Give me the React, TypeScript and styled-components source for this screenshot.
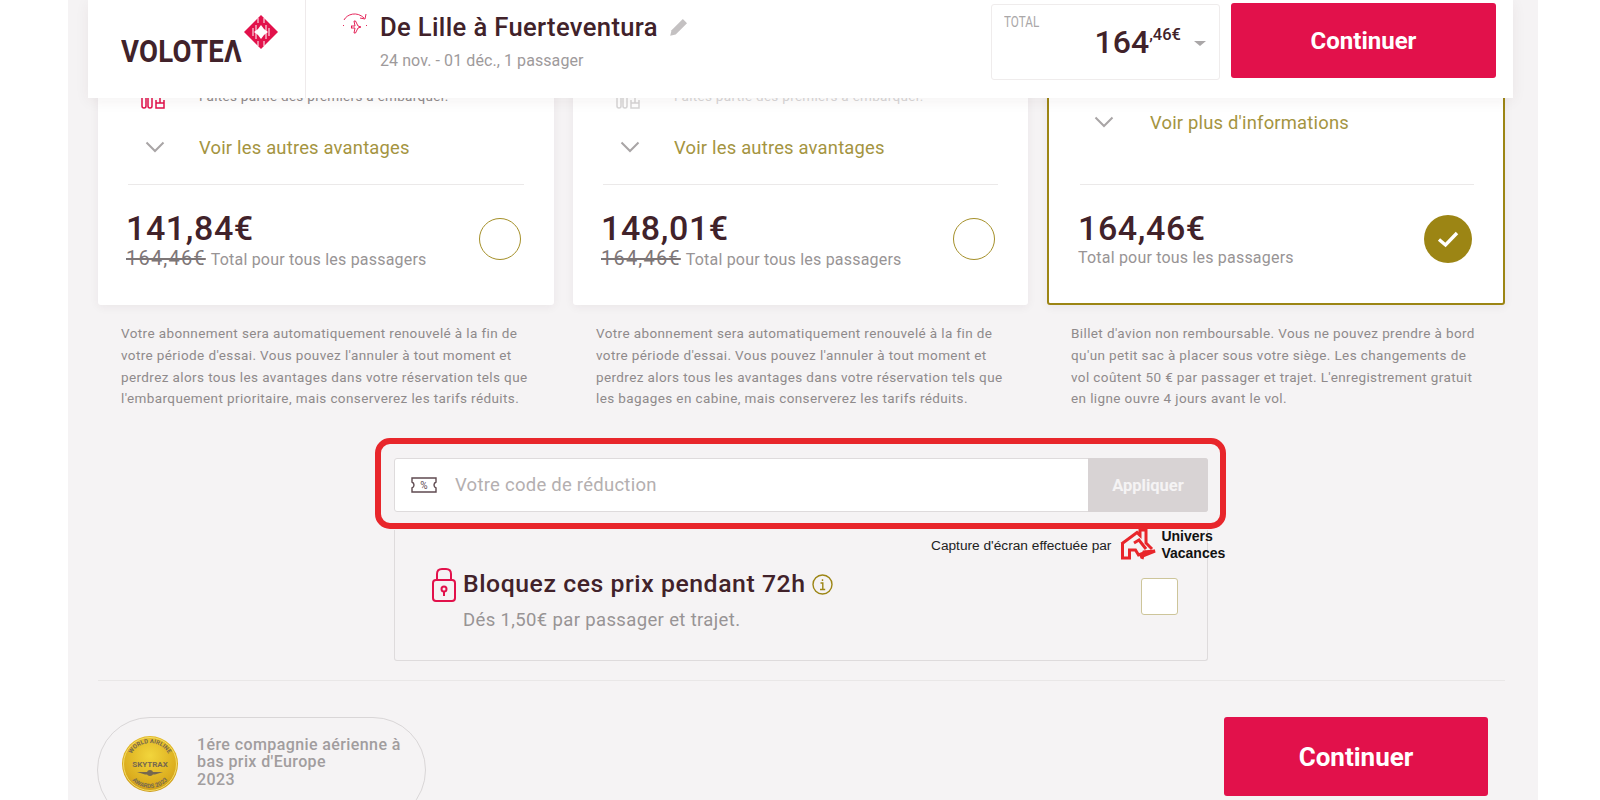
import React from "react";
import styled, { createGlobalStyle } from "styled-components";

const Global = createGlobalStyle`
  html, body { margin: 0; padding: 0; background: #fff; overflow: hidden; }
  * { box-sizing: border-box; }
  body { font-family: "Roboto", "Liberation Sans", sans-serif; color: #41222a; }
`;

const Page = styled.div`
  position: relative;
  width: 1600px;
  height: 800px;
  overflow: hidden;
`;

const Main = styled.main`
  margin-left: 68px;
  width: 1470px;
  height: 800px;
  background: #f5f3f4;
  padding: 0 33px 0 30px;
  display: flex;
  flex-direction: column;
`;

const Header = styled.header`
  position: absolute;
  left: 88px;
  top: 0;
  width: 1425px;
  height: 98px;
  background: #fff;
  display: flex;
  box-shadow: 0 3px 14px rgba(60, 30, 40, 0.06);
  z-index: 3;
`;

const LogoCell = styled.div`
  width: 218px;
  flex: none;
  border-right: 1px solid #eeeaeb;
  display: flex;
  align-items: flex-start;
  padding: 15px 0 0 33px;
  position: relative;
`;

const LogoText = styled.span`
  font-family: "Roboto", "Liberation Sans", sans-serif;
  font-weight: 700;
  font-size: 32px;
  line-height: 32px;
  letter-spacing: 0.3px;
  color: #41222a;
  margin-top: 20px;
  transform: scaleX(0.86);
  transform-origin: left center;
`;

const LogoMark = styled.svg`
  position: absolute;
  left: 156px;
  top: 15px;
`;

const Trip = styled.div`
  flex: 1;
  display: flex;
  padding: 12px 0 0 35px;
`;

const TripIcon = styled.svg`
  flex: none;
  margin-right: 11px;
`;

const TripInfo = styled.div`
  display: flex;
  flex-direction: column;
`;

const TripTitle = styled.div`
  display: flex;
  align-items: center;
  gap: 10px;
  font-size: 25.6px;
  line-height: 30px;
  font-weight: 500;
  letter-spacing: 0.35px;
  color: #41222a;
`;

const TripDates = styled.div`
  font-size: 16px;
  line-height: 20px;
  margin-top: 9px;
  color: #9e9a9b;
  letter-spacing: 0.08px;
`;

const HeaderRight = styled.div`
  display: flex;
  gap: 11px;
  padding: 3px 17px 0 0;
  align-items: flex-start;
`;

const TotalBox = styled.div`
  position: relative;
  width: 229px;
  height: 76px;
  margin-top: 1px;
  border: 1px solid #efecec;
  border-radius: 3px;
  background: #fff;
  padding: 9px 12px 0;
`;

const TotalLabel = styled.div`
  font-size: 15px;
  line-height: 16px;
  color: #aaa7a8;
  transform: scaleX(0.78);
  transform-origin: left center;
`;

const TotalValue = styled.div`
  display: flex;
  justify-content: flex-end;
  align-items: flex-start;
  padding-right: 1px;
  margin-top: -7px;
`;

const TotalInt = styled.span`
  font-size: 32px;
  line-height: 38px;
  font-weight: 500;
  color: #41222a;
`;

const TotalDec = styled.span`
  font-size: 16.5px;
  line-height: 22px;
  font-weight: 500;
  color: #41222a;
  margin-right: 13px;
  margin-top: 1px;
`;

const Caret = styled.span`
  width: 0;
  height: 0;
  margin-top: 18px;
  border-left: 6px solid transparent;
  border-right: 6px solid transparent;
  border-top: 5px solid #aaa7a8;
`;

const Cta = styled.button<{ $w: number; $h: number; $size: number }>`
  width: ${(p) => p.$w}px;
  height: ${(p) => p.$h}px;
  flex: none;
  border: 0;
  border-radius: 3px;
  background: #e2114b;
  color: #fff;
  font-family: "Roboto", sans-serif;
  font-size: ${(p) => p.$size}px;
  font-weight: 700;
`;

const Cards = styled.div`
  display: grid;
  grid-template-columns: 456px 455px 458px;
  column-gap: 19px;
`;

const Column = styled.section`
  display: flex;
  flex-direction: column;
`;

const Card = styled.div<{ $selected?: boolean }>`
  height: 305px;
  background: #fff;
  border: ${(p) => (p.$selected ? "2px solid #9c8514" : "0")};
  border-radius: 3px;
  box-shadow: 0 2px 10px rgba(70, 40, 50, 0.06);
  display: flex;
  flex-direction: column;
  justify-content: flex-end;
  padding: ${(p) => (p.$selected ? "0 29px 0 31px" : "0 30px")};
`;

const Perk = styled.div<{ $faded?: boolean }>`
  display: flex;
  align-items: center;
  gap: 34px;
  margin-left: 13px;
  height: 26px;
  margin-bottom: 26px;
  font-size: 13.5px;
  color: #8f8a8b;
  opacity: ${(p) => (p.$faded ? 0.35 : 1)};
  letter-spacing: 0.3px;
`;

const More = styled.div<{ $after: number; $indent: number; $space: number }>`
  display: flex;
  align-items: center;
  gap: ${(p) => p.$space}px;
  height: 24px;
  margin-left: ${(p) => p.$indent}px;
  margin-bottom: ${(p) => p.$after}px;
  font-size: 18.4px;
  letter-spacing: 0.2px;
  color: #a4943f;
`;

const Rule = styled.hr`
  width: 100%;
  margin: 0;
  border: 0;
  border-top: 1px solid #ebe9e9;
`;

const PriceRow = styled.div<{ $inset?: boolean }>`
  height: ${(p) => (p.$inset ? 118 : 120)}px;
  display: flex;
  justify-content: space-between;
  align-items: flex-start;
  padding-top: 25px;
`;

const PriceText = styled.div`
  display: flex;
  flex-direction: column;
  margin-left: -2px;
`;

const Price = styled.div`
  font-size: 34px;
  line-height: 36px;
  font-weight: 500;
  letter-spacing: 0.6px;
  color: #41222a;
`;

const PriceNote = styled.div`
  font-size: 16px;
  line-height: 22px;
  margin-top: 1px;
  color: #989495;
  letter-spacing: 0.2px;
`;

const OldPrice = styled.s`
  font-size: 20px;
  letter-spacing: 1.2px;
  color: #7d7677;
  margin-right: 5px;
`;

const Radio = styled.span`
  width: 42px;
  height: 42px;
  margin: 8px 3px 0 0;
  border: 1.5px solid #a5902a;
  border-radius: 50%;
  background: #fff;
`;

const Selected = styled.span`
  width: 48px;
  height: 48px;
  margin: 5px 2px 0 0;
  border-radius: 50%;
  background: #9c8514;
  display: flex;
  align-items: center;
  justify-content: center;
`;

const Terms = styled.p<{ $indent: number }>`
  margin: 0;
  padding: 18px 10px 0 ${(p) => p.$indent}px;
  font-size: 13.5px;
  line-height: 21.8px;
  letter-spacing: 0.39px;
  color: #8f8a8b;
  white-space: pre-line;
`;

const Promo = styled.div`
  align-self: center;
  width: 814px;
  height: 54px;
  margin: 48px 0 0 -1px;
  background: #fff;
  border: 1px solid #dedbdc;
  border-radius: 3px;
  display: flex;
  align-items: center;
  flex: none;
`;

const PromoIcon = styled.svg`
  margin-left: 15px;
  flex: none;
`;

const PromoText = styled.span`
  flex: 1;
  margin-left: 17px;
  font-size: 18.5px;
  letter-spacing: 0.25px;
  color: #b4afb0;
`;

const PromoButton = styled.span`
  width: 120px;
  height: 54px;
  margin: -1px -1px -1px 0;
  background: #d8d3d4;
  border-radius: 0 3px 3px 0;
  color: #f5f3f4;
  font-weight: 700;
  font-size: 16.5px;
  display: flex;
  align-items: center;
  justify-content: center;
`;

const Highlight = styled.div`
  position: absolute;
  left: 375px;
  top: 438px;
  width: 851px;
  height: 91px;
  border: 6px solid #e8262b;
  border-radius: 15px;
  z-index: 2;
`;

const Credit = styled.div`
  position: absolute;
  left: 931px;
  top: 528px;
  display: flex;
  align-items: center;
  font-family: "Liberation Sans", sans-serif;
  color: #222;
  z-index: 1;
`;

const CreditText = styled.span`
  font-size: 13.7px;
  margin-right: 9px;
`;

const CreditBrand = styled.span`
  font-size: 14px;
  line-height: 17px;
  font-weight: 700;
  color: #111;
  margin-left: 5px;
  white-space: pre-line;
`;

const Lock = styled.div`
  align-self: center;
  width: 814px;
  height: 131px;
  margin: 18px 0 0 -1px;
  border: 1px solid #dedbdc;
  border-top: 0;
  border-radius: 0 0 3px 3px;
  display: flex;
  flex: none;
  padding: 38px 29px 0 37px;
`;

const LockBody = styled.div`
  flex: 1;
  margin-left: 7px;
`;

const LockTitle = styled.div`
  display: flex;
  align-items: center;
  gap: 6px;
  font-size: 24.8px;
  line-height: 32px;
  font-weight: 500;
  letter-spacing: 0.55px;
  color: #41222a;
`;

const LockNote = styled.div`
  font-size: 18.5px;
  line-height: 22px;
  margin-top: 9px;
  color: #989495;
  letter-spacing: 0.36px;
`;

const Check = styled.span`
  width: 37px;
  height: 37px;
  margin-top: 10px;
  background: #fff;
  border: 1px solid #cdc59a;
  border-radius: 3px;
`;

const Divider = styled.hr`
  width: 100%;
  flex: none;
  margin: 19px 0 0;
  border: 0;
  border-top: 1px solid #e9e7e7;
`;

const Footer = styled.footer`
  display: flex;
  justify-content: space-between;
  padding: 36px 17px 0 0;
  flex: none;
`;

const Award = styled.div`
  width: 329px;
  height: 106px;
  margin-left: -1px;
  border: 1px solid #d9d6d7;
  border-radius: 54px;
  display: flex;
  align-items: flex-start;
  padding: 18px 0 0 24px;
`;

const AwardText = styled.div`
  margin-left: 19px;
  font-size: 16px;
  line-height: 17.3px;
  font-weight: 500;
  letter-spacing: 0.4px;
  color: #a19d9e;
  white-space: pre-line;
`;

const Chevron = () => (
  <svg width="20" height="12" viewBox="0 0 20 12" fill="none">
    <path d="M1.5 1.5 10 10l8.5-8.5" stroke="#a9a5a6" strokeWidth="2" />
  </svg>
);

const Seat = ({ color }: { color: string }) => (
  <svg width="24" height="26" viewBox="0 0 24 26" fill="none" stroke={color} strokeWidth="1.5">
    <path d="M1 12v11q0 2 2 2t2-2V12M7 12v11q0 2 2 2t2-2V12" />
    <path d="M15 17v8h8v-8M15 20h8M19 14v6" />
  </svg>
);

const cardData = [
  {
    price: "141,84€",
    faded: false,
    terms:
      "Votre abonnement sera automatiquement renouvelé à la fin de\nvotre période d'essai. Vous pouvez l'annuler à tout moment et\nperdrez alors tous les avantages dans votre réservation tels que\nl'embarquement prioritaire, mais conserverez les tarifs réduits.",
  },
  {
    price: "148,01€",
    faded: true,
    terms:
      "Votre abonnement sera automatiquement renouvelé à la fin de\nvotre période d'essai. Vous pouvez l'annuler à tout moment et\nperdrez alors tous les avantages dans votre réservation tels que\nles bagages en cabine, mais conserverez les tarifs réduits.",
  },
];

export default function App() {
  return (
    <Page>
      <Global />
      <Header>
        <LogoCell>
          <LogoText>VOLOTEΛ</LogoText>
          <LogoMark width="34" height="34" viewBox="0 0 34 34">
            <path d="M17 0 34 17 17 34 0 17Z" fill="#e2114b" />
            <path d="M17 10l3 4 4 3-4 3-3 4-3-4-4-3 4-3Z" fill="#fff" />
            <path d="M9 13v8M12 10v14M22 10v14M25 13v8M14 3v5M20 3v5M14 26v5M20 26v5" stroke="#fff" strokeWidth="1" />
          </LogoMark>
        </LogoCell>
        <Trip>
          <TripIcon width="28" height="26" viewBox="0 0 28 26" fill="none" stroke="#e2114b" strokeWidth="0.9">
            <path d="M3 8C6 2 16-1 23 6" />
            <path d="M25 2l-1 5-5-1" />
            <path d="M2 13l1 1M25 13l1 1" />
            <path d="M10 14h4l-1-5h1.500l2.500 5 3 1-3 1-2.500 5H13l1-5h-4l1-1Z" />
          </TripIcon>
          <TripInfo>
            <TripTitle>
              De Lille à Fuerteventura
              <svg width="22" height="22" viewBox="0 0 20 20">
                <path d="M2 18l1.200-5L13.500 2.700l3.800 3.800L7 16.800Z" fill="#c4c1c2" />
              </svg>
            </TripTitle>
            <TripDates>24 nov. - 01 déc., 1 passager</TripDates>
          </TripInfo>
        </Trip>
        <HeaderRight>
          <TotalBox>
            <TotalLabel>TOTAL</TotalLabel>
            <TotalValue>
              <TotalInt>164</TotalInt>
              <TotalDec>,46€</TotalDec>
              <Caret />
            </TotalValue>
          </TotalBox>
          <Cta $w={265} $h={75} $size={24}>Continuer</Cta>
        </HeaderRight>
      </Header>

      <Main>
        <Cards>
          {cardData.map((c) => (
            <Column key={c.price}>
              <Card>
                <Perk $faded={c.faded}>
                  <Seat color={c.faded ? "#8f8a8b" : "#e2114b"} />
                  Faites partie des premiers à embarquer.
                </Perk>
                <More $after={25} $indent={17} $space={34}>
                  <Chevron />
                  Voir les autres avantages
                </More>
                <Rule />
                <PriceRow>
                  <PriceText>
                    <Price>{c.price}</Price>
                    <PriceNote>
                      <OldPrice>164,46€</OldPrice>
                      Total pour tous les passagers
                    </PriceNote>
                  </PriceText>
                  <Radio />
                </PriceRow>
              </Card>
              <Terms $indent={23}>{c.terms}</Terms>
            </Column>
          ))}
          <Column>
            <Card $selected>
              <More $after={50} $indent={14} $space={36}>
                <Chevron />
                Voir plus d'informations
              </More>
              <Rule />
              <PriceRow $inset>
                <PriceText>
                  <Price>164,46€</Price>
                  <PriceNote>Total pour tous les passagers</PriceNote>
                </PriceText>
                <Selected>
                  <svg width="24" height="18" viewBox="0 0 24 18" fill="none">
                    <path d="M3 9.500 9.500 15 21 3" stroke="#fff" strokeWidth="3.400" />
                  </svg>
                </Selected>
              </PriceRow>
            </Card>
            <Terms $indent={24}>
              {"Billet d'avion non remboursable. Vous ne pouvez prendre à bord\nqu'un petit sac à placer sous votre siège. Les changements de\nvol coûtent 50 € par passager et trajet. L'enregistrement gratuit\nen ligne ouvre 4 jours avant le vol."}
            </Terms>
          </Column>
        </Cards>

        <Promo>
          <PromoIcon width="28" height="18" viewBox="0 0 28 18" fill="none" stroke="#5f4a50" strokeWidth="1.4">
            <path d="M2 2h24v4q-2 1-2 3t2 3v4H2v-4q2-1 2-3T2 6Z" />
            <text x="14" y="13" textAnchor="middle" fontSize="10" fontFamily="Roboto" fill="#5f4a50" stroke="none">%</text>
          </PromoIcon>
          <PromoText>Votre code de réduction</PromoText>
          <PromoButton>Appliquer</PromoButton>
        </Promo>

        <Lock>
          <svg width="24" height="34" viewBox="0 0 24 34" fill="none" stroke="#e2114b" strokeWidth="2">
            <rect x="1" y="12" width="22" height="21" rx="3" />
            <path d="M5 12V6q0-5 5-5h4q5 0 5 5v6" />
            <circle cx="12" cy="21" r="2.500" />
            <path d="M12 23v5" />
          </svg>
          <LockBody>
            <LockTitle>
              Bloquez ces prix pendant 72h
              <svg width="21" height="21" viewBox="0 0 21 21" fill="none" stroke="#9c8514" strokeWidth="1.4">
                <circle cx="10.500" cy="10.500" r="9.500" />
                <path d="M8.500 9h2.300v6M8 15.500h5.200M10.500 5.200v1.800" />
              </svg>
            </LockTitle>
            <LockNote>Dés 1,50€ par passager et trajet.</LockNote>
          </LockBody>
          <Check />
        </Lock>

        <Divider />

        <Footer>
          <Award>
            <svg width="56" height="56" viewBox="0 0 56 56">
              <defs>
                <radialGradient id="gold" cx="50%" cy="35%" r="70%">
                  <stop offset="0%" stopColor="#f2d53c" />
                  <stop offset="70%" stopColor="#dcae1f" />
                  <stop offset="100%" stopColor="#c8951a" />
                </radialGradient>
                <path id="arcTop" d="M7 28a21 21 0 0 1 42 0" />
                <path id="arcBottom" d="M4 28a24 24 0 0 0 48 0" />
              </defs>
              <circle cx="28" cy="28" r="28" fill="url(#gold)" />
              <circle cx="28" cy="28" r="26.500" fill="none" stroke="#f3dc66" strokeWidth="1" />
              <text fontSize="6" fontWeight="700" fontFamily="Roboto" fill="#76684f" textAnchor="middle">
                <textPath href="#arcTop" startOffset="50%">WORLD AIRLINE</textPath>
              </text>
              <text x="28" y="30.500" textAnchor="middle" fontSize="8" fontWeight="700" fontFamily="Roboto" fill="#76684f">SKYTRAX</text>
              <text fontSize="6" fontWeight="700" fontFamily="Roboto" fill="#76684f" textAnchor="middle">
                <textPath href="#arcBottom" startOffset="50%">AWARDS 2023</textPath>
              </text>
              <path d="M15 36h26l-8 2.500h-10Z" fill="#76684f" />
              <circle cx="28" cy="37" r="3" fill="#76684f" />
            </svg>
            <AwardText>{"1ére compagnie aérienne à\nbas prix d'Europe\n2023"}</AwardText>
          </Award>
          <Cta $w={264} $h={79} $size={26}>Continuer</Cta>
        </Footer>
      </Main>

      <Highlight />
      <Credit>
        <CreditText>Capture d'écran effectuée par</CreditText>
        <svg width="36" height="32" viewBox="0 0 36 32" fill="none" stroke="#e8262b" strokeWidth="3">
          <path d="M1.500 15 17 3.500l3 3V1h6v13l6 6" />
          <path d="M2.500 14v15h7v-8h6l3 5 8-3" />
          <path d="M14 14l5-3 7 9M20 28l15-6-11 1-2 7" />
        </svg>
        <CreditBrand>{"Univers\nVacances"}</CreditBrand>
      </Credit>
    </Page>
  );
}
